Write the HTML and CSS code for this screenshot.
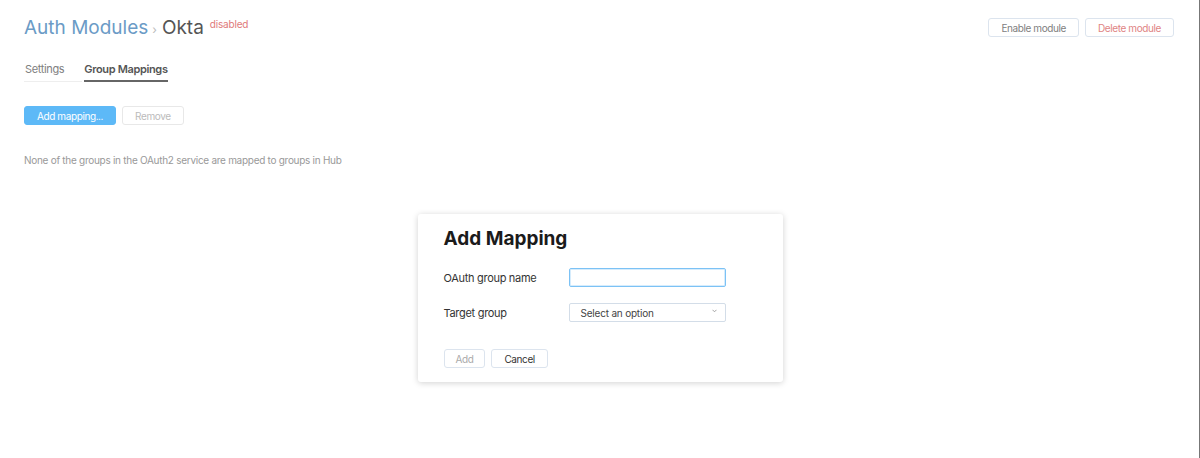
FILE: index.html
```html
<!DOCTYPE html>
<html lang="en">
<head>
    <meta charset="UTF-8">
    <title>Auth Modules - Okta</title>
    <link rel="stylesheet" href="styles.css">
</head>
<body>

    <div class="page">
        <div class="header">
            <h1 class="title">
                <a class="crumb" href="#">Auth Modules</a>
                <span class="sep">›</span>
                <span class="current">Okta</span>
                <span class="status">disabled</span>
            </h1>
            <div class="header-actions">
                <button class="btn">Enable module</button>
                <button class="btn btn-danger">Delete module</button>
            </div>
        </div>

        <!-- Tabs -->
        <div class="tabs">
            <span class="tab">Settings</span>
            <span class="tab tab-active">Group Mappings</span>
        </div>

        <div class="toolbar">
            <button class="btn btn-primary">Add mapping...</button>
            <button class="btn btn-disabled">Remove</button>
        </div>

        <p class="empty">None of the groups in the OAuth2 service are mapped to groups in Hub</p>

        <!-- Dialog -->
        <div class="dialog-wrap">
            <div class="dialog">
                <h2>Add Mapping</h2>
                <div class="form-row">
                    <label for="groupName">OAuth group name</label>
                    <input type="text" id="groupName" class="field field-focus">
                </div>
                <div class="form-row">
                    <label>Target group</label>
                    <div class="field select">
                        <span>Select an option</span>
                        <svg width="5" height="4" viewBox="0 0 5 4"><path d="M0.5 0.8 L2.5 2.8 L4.5 0.8" fill="none" stroke="#999" stroke-width="0.9"/></svg>
                    </div>
                </div>
                <div class="dialog-actions">
                    <button class="btn btn-outline btn-disabled-outline">Add</button>
                    <button class="btn btn-outline">Cancel</button>
                </div>
            </div>
        </div>
    </div>

</body>
</html>
```

FILE: styles.css
```css
html, body {
    margin: 0;
    height: 100%;
}

body {
    font-family: Inter, "Noto Sans", sans-serif;
    background-color: #fff;
    color: #333;
    border-right: 1px solid #777;
    box-sizing: border-box;
}

.page {
    padding: 15px 24px 0 24px;
}

.header {
    display: flex;
    justify-content: space-between;
    align-items: flex-start;
}

.title {
    margin: 0;
    font-size: 19px;
    font-weight: 400;
    line-height: 26px;
    display: flex;
    align-items: baseline;
}

.crumb {
    color: #6b9bc6;
    text-decoration: none;
}

.sep {
    color: #bbb;
    font-size: 12px;
    margin: 0 5px 0 4px;
}

.current {
    color: #555;
}

.status {
    color: #e07a7a;
    font-size: 10px;
    align-self: flex-start;
    line-height: 18px;
    margin-left: 6px;
    letter-spacing: -0.2px;
}

.header-actions {
    display: flex;
    gap: 6px;
    margin-top: 3px;
    margin-right: 1px;
}

button {
    font-family: Inter, "Noto Sans", sans-serif;
}

.btn {
    background-color: #fff;
    border: 1px solid #dce4ee;
    border-radius: 3px;
    color: #808080;
    font-size: 10px;
    letter-spacing: -0.4px;
    height: 19px;
    padding: 0 12px;
    cursor: pointer;
}

.btn-danger {
    color: #e08484;
}

.tabs {
    display: flex;
    margin-top: 19px;
}

.tab {
    font-size: 11px;
    letter-spacing: -0.35px;
    line-height: 14px;
    color: #808080;
    padding: 0 18px 5px 1px;
    margin-right: 2px;
    border-bottom: 1px solid #eee;
}

.tab-active {
    font-weight: 600;
    color: #555;
    border-bottom: 2px solid #666;
    padding: 0 0 4px 0;
}

.toolbar {
    display: flex;
    gap: 6px;
    margin-top: 24px;
}

.btn-primary {
    background-color: #5db9f7;
    border-color: #5db9f7;
    color: #fff;
}

.btn-disabled {
    border-color: #e8e8e8;
    color: #bbb;
}

.empty {
    margin: 29px 0 0 0;
    font-size: 10px;
    line-height: 12px;
    letter-spacing: -0.28px;
    color: #999;
}

.dialog-wrap {
    display: flex;
    justify-content: center;
    margin-top: 48px;
    padding-left: 1px;
}

.dialog {
    width: 339px;
    height: 142px;
    background-color: #fff;
    border-radius: 3px;
    box-shadow: 0 1px 6px rgba(0, 0, 0, 0.18);
    padding: 13px 0 13px 26px;
}

.dialog h2 {
    margin: 0 0 17px 0;
    font-size: 19px;
    font-weight: 700;
    color: #1b1b1b;
    line-height: 24px;
}

.form-row {
    display: flex;
    align-items: center;
    height: 19px;
    margin-bottom: 16px;
}

.form-row label {
    width: 125px;
    font-size: 11px;
    letter-spacing: -0.3px;
    color: #333;
}

.field {
    box-sizing: border-box;
    width: 157px;
    height: 19px;
    border: 1px solid #d3dde8;
    border-radius: 2px;
    background: #fff;
    margin: 0;
}

input.field-focus {
    border: 1px solid #7cc2f5;
    box-shadow: inset 0 0 0 1px #d6ecfc;
    outline: none;
}

.select {
    display: flex;
    align-items: center;
    justify-content: space-between;
    padding: 0 8px 0 11px;
    font-size: 10px;
    letter-spacing: -0.2px;
    color: #444;
}

.select svg {
    margin-top: -4px;
}

.dialog-actions {
    display: flex;
    gap: 6px;
    margin-top: 27px;
}

.btn-outline {
    color: #333;
}

.btn-disabled-outline {
    color: #aaa;
    padding: 0 11px;
}
```
